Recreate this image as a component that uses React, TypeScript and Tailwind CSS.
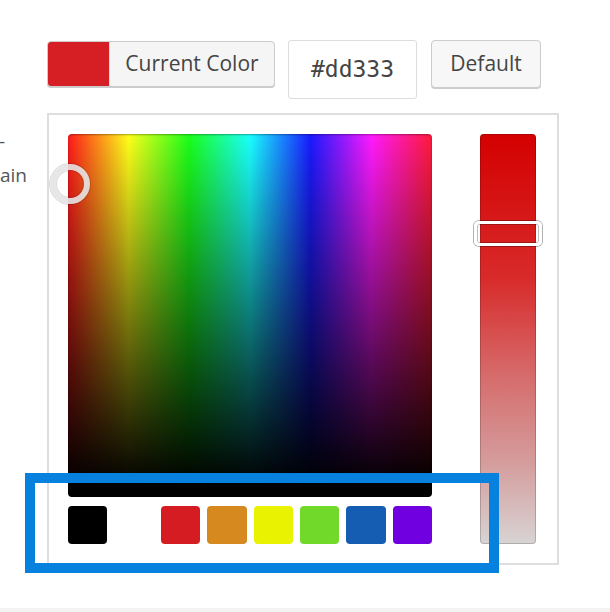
import React from "react";

const swatches = ["#000000", "#ffffff", "#d51c23", "#d6891f", "#e9f200", "#70d92a", "#155db3", "#7000e0"];

function ColorSquare() {
    return (
        <div className="relative h-[363px] w-[364px] rounded-[4px] bg-[linear-gradient(to_bottom,transparent,#000_97%),linear-gradient(to_right,#ff1a1a,#ffff1a,#1aff1a,#1affff,#1a1aff,#ff1aff,#ff1a3a)] shadow-[inset_0_1px_2px_rgba(0,0,0,0.35)]">
            <div className="absolute left-[-18px] top-[30px] h-[40px] w-[40px] rounded-full border-[6px] border-[#e4e4e4]/90 shadow-[0_0_0_1px_rgba(0,0,0,0.15),inset_0_0_0_1px_rgba(0,0,0,0.15)]" />
        </div>
    );
}

function Strip() {
    return (
        <div className="relative h-[410px] w-[56px] rounded-[4px] bg-[linear-gradient(to_bottom,#d40000,#d82a2a_35%,#d66e6e_60%,#d59c9c_80%,#d8d4d4)] shadow-[inset_0_0_0_1px_rgba(0,0,0,0.18)]">
            <div className="absolute left-[-6px] top-[87px] h-[25px] w-[68px] rounded-[5px] border-[3px] border-white shadow-[0_0_0_1px_rgba(0,0,0,0.3),inset_0_0_0_1px_rgba(0,0,0,0.25)]" />
        </div>
    );
}

export default function App() {
    return (
        <div className="relative h-[612px] w-[610px] overflow-hidden bg-white font-['Open_Sans',sans-serif] text-[#555]">
            <div className="flex">
                <div className="w-[47px] pt-[124px] text-[19px] leading-[34px] text-[#555]">
                    <div className="-ml-[1px]">-</div>
                    <div>ain</div>
                </div>

                <div className="pt-[40px]">
                    <div className="flex items-start">
                        <button className="mt-[1px] flex h-[46px] w-[228px] items-stretch overflow-hidden rounded-[4px] border border-[#ccc] bg-[#f5f5f5] shadow-[0_1px_0_#ccc]">
                            <span className="w-[61px] bg-[#d51f25]" />
                            <span className="flex flex-1 items-center justify-center border-l border-[#ddd] text-[21px] text-[#444]">
                                Current Color
                            </span>
                        </button>
                        <div className="ml-[13px] flex h-[59px] w-[129px] items-center justify-center rounded-[3px] border border-[#ddd] bg-white font-['DejaVu_Sans_Mono',monospace] text-[23px] text-[#444]">
                            #dd333
                        </div>
                        <button className="ml-[14px] flex h-[48px] w-[110px] items-center justify-center rounded-[4px] border border-[#ccc] bg-[#f7f7f7] text-[21px] text-[#444] shadow-[0_1px_0_#ccc]">
                            Default
                        </button>
                    </div>

                    <div className="mt-[14px] flex h-[452px] w-[512px] gap-[48px] border-2 border-[#dedede] p-[19px]">
                        <div className="flex flex-col gap-[9px]">
                            <ColorSquare />
                            <div className="grid grid-cols-8 gap-[7px]">
                                {swatches.map((c) => (
                                    <div key={c} className="h-[38px] rounded-[4px]" style={{ backgroundColor: c }} />
                                ))}
                            </div>
                        </div>
                        <Strip />
                    </div>
                </div>
            </div>

            <div className="absolute bottom-0 left-0 h-[4px] w-full bg-[#f3f3f4]" />

            <div className="absolute left-[25px] top-[473px] h-[100px] w-[474px] border-[10px] border-[#0681dd]" />
        </div>
    );
}
